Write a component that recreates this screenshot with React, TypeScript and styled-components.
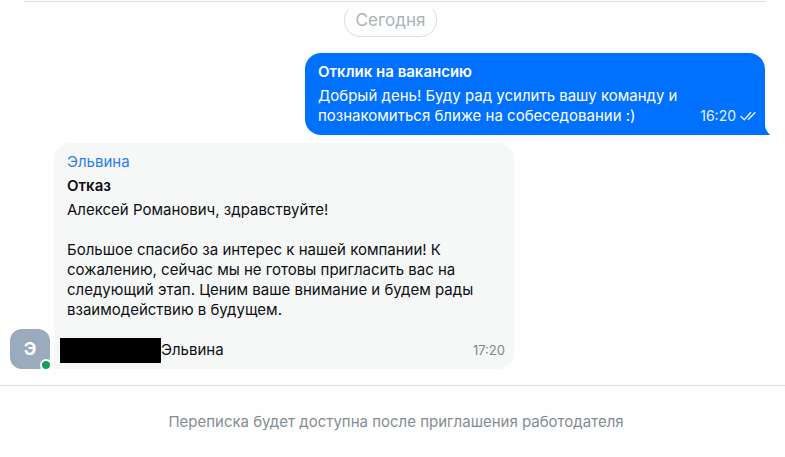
import React from "react";
import styled, { createGlobalStyle } from "styled-components";

const GlobalStyle = createGlobalStyle`
  * { box-sizing: border-box; }
  html, body, #root { height: 100%; }
  body {
    margin: 0;
    background: #fefefe;
    color: #0d0f12;
    font: 15px/20px Inter, "Noto Sans", sans-serif;
  }
  p, h3 { margin: 0; }
`;

const Page = styled.div`
  display: flex;
  flex-direction: column;
  min-height: 100%;
`;

const PinnedCard = styled.div`
  height: 2px;
  margin: 0 18px 7px 24px;
  border-bottom: 1px solid #dcdfe1;
  border-radius: 0 0 4px 4px;
`;

const Messages = styled.main`
  display: flex;
  flex: 1;
  flex-direction: column;
  padding: 0 14px 16px 10px;
  overflow: hidden;
`;

const DateChip = styled.time`
  align-self: center;
  margin: -6px 0 16px;
  padding: 5px 11px;
  border: 1px solid #d8dee0;
  border-radius: 16px;
  color: #aab3b8;
  font-size: 17px;
  line-height: 22px;
`;

const MessageRow = styled.div<{ $own?: boolean }>`
  display: flex;
  align-items: flex-end;
  justify-content: ${(p) => (p.$own ? "flex-end" : "flex-start")};
  gap: 4px;
  margin-bottom: ${(p) => (p.$own ? 8 : 0)}px;
  padding-right: 6px;
`;

const Bubble = styled.article<{ $own?: boolean }>`
  position: relative;
  display: flex;
  flex: 0 1 460px;
  flex-direction: column;
  gap: 4px;
  padding: 9px 9px 9px 13px;
  border-radius: ${(p) => (p.$own ? "16px 16px 0 16px" : "16px 16px 16px 0")};
  background: ${(p) => (p.$own ? "#0070ff" : "#f6f7f7")};
  color: ${(p) => (p.$own ? "#fff" : "#0d0f12")};
`;

const Tail = styled.svg`
  position: absolute;
  bottom: 0;
  left: 100%;
  width: 5px;
  height: 10px;
`;

const Author = styled.span`
  color: #2b7de9;
`;

const Title = styled.h3`
  font-size: 15px;
  font-weight: 600;
`;

const Body = styled.p`
  padding-right: 4px;
  white-space: pre-line;
`;

const LastLine = styled.div`
  display: flex;
  align-items: center;
`;

const Redaction = styled.span`
  width: 101px;
  height: 25px;
  margin: -3px 0 -3px -7px;
  background: #000;
`;

const Stamp = styled.div<{ $own?: boolean }>`
  position: absolute;
  right: 9px;
  bottom: 9px;
  display: flex;
  align-items: center;
  gap: 4px;
  color: ${(p) => (p.$own ? "#e6f1ff" : "#81898d")};
  font-size: ${(p) => (p.$own ? 14 : 13)}px;
`;

const Avatar = styled.div`
  position: relative;
  display: grid;
  flex: none;
  place-items: center;
  width: 40px;
  height: 40px;
  border-radius: 12px;
  background: #9aabbd;
  color: #fff;
  font-size: 17px;
  font-weight: 700;
`;

const OnlineDot = styled.span`
  position: absolute;
  right: -2px;
  bottom: -2px;
  width: 12px;
  height: 12px;
  border: 2px solid #fff;
  border-radius: 50%;
  background: #17a05a;
`;

const Footer = styled.footer`
  padding: 26px 13px 25px 20px;
  border-top: 1px solid #dcdfe1;
  color: #858d92;
  text-align: center;
`;

export default function App() {
  return (
    <Page>
      <GlobalStyle />
      <PinnedCard />
      <Messages>
        <DateChip>Сегодня</DateChip>
        <MessageRow $own>
          <Bubble $own>
            <Title>Отклик на вакансию</Title>
            <Body>Добрый день! Буду рад усилить вашу команду и познакомиться ближе на собеседовании :)</Body>
            <Stamp $own>
              <time>16:20</time>
              <svg width="16" height="10" viewBox="0 0 16 10" fill="none" stroke="currentColor" strokeWidth="1.4" role="img" aria-label="Прочитано">
                <path d="M.5 5 4.3 8.8 11 1.2M8 8.8 15.4 1.2" />
              </svg>
            </Stamp>
            <Tail viewBox="0 0 5 10" aria-hidden="true">
              <path d="M0 0C0 4 2 6.500 5 10H0Z" fill="#0070ff" />
            </Tail>
          </Bubble>
        </MessageRow>
        <MessageRow>
          <Avatar>
            Э
            <OnlineDot />
          </Avatar>
          <Bubble>
            <Author>Эльвина</Author>
            <Title>Отказ</Title>
            <div>
              <Body>
                {"Алексей Романович, здравствуйте!\n\nБольшое спасибо за интерес к нашей компании! К сожалению, сейчас мы не готовы пригласить вас на следующий этап. Ценим ваше внимание и будем рады взаимодействию в будущем.\n\n"}
              </Body>
              <LastLine>
                <Redaction />
                Эльвина
              </LastLine>
            </div>
            <Stamp>
              <time>17:20</time>
            </Stamp>
          </Bubble>
        </MessageRow>
      </Messages>
      <Footer>Переписка будет доступна после приглашения работодателя</Footer>
    </Page>
  );
}
